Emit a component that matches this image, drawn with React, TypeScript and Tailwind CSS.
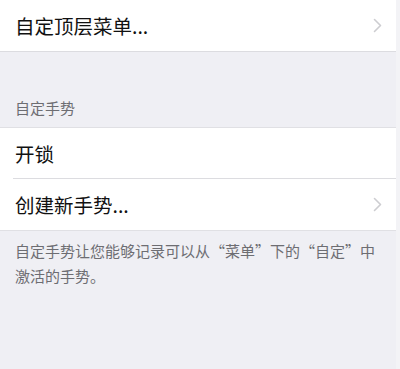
import React from 'react';

const CJK = "font-['PingFang_SC','Noto_Sans_CJK_SC',sans-serif]";

const Chevron = () => (
  <svg width="9" height="15" viewBox="0 0 9 15" className="shrink-0">
    <path d="M1.5 1.5 L7.5 7.5 L1.5 13.5" fill="none" stroke="#cdcdd1" strokeWidth="1.6" strokeLinecap="round" strokeLinejoin="round" />
  </svg>
);

const Row = ({ label, chevron, divider }: { label: string; chevron?: boolean; divider?: boolean }) => (
  <div className="relative h-[51px] flex items-center pl-[15px] pr-[14px] bg-white">
    <span className="flex-1 text-[19.5px] text-[#111] leading-none">{label}</span>
    {chevron && <Chevron />}
    {divider && <div className="absolute left-[13px] right-0 bottom-0 h-px bg-[#dcdce0]" />}
  </div>
);

export default function App() {
  return (
    <div className={`w-[400px] h-[369px] bg-[#efeff4] overflow-hidden ${CJK} border-r-[4px] border-r-[#f3f3f6]`}>
      <div className="border-b border-[#dcdce0]">
        <Row label="自定顶层菜单..." chevron />
      </div>
      <div className="h-[75px] flex items-end pl-[15px] pb-[12px]">
        <span className="text-[15px] text-[#6d6d72] leading-none">自定手势</span>
      </div>
      <div className="border-y border-[#e0e0e4]">
        <Row label="开锁" divider />
        <Row label="创建新手势..." chevron />
      </div>
      <p className="px-[15px] pt-[8px] text-[15px] leading-[24.5px] text-[#6d6d72]">
        自定手势让您能够记录可以从“菜单”下的“自定”中激活的手势。
      </p>
    </div>
  );
}
